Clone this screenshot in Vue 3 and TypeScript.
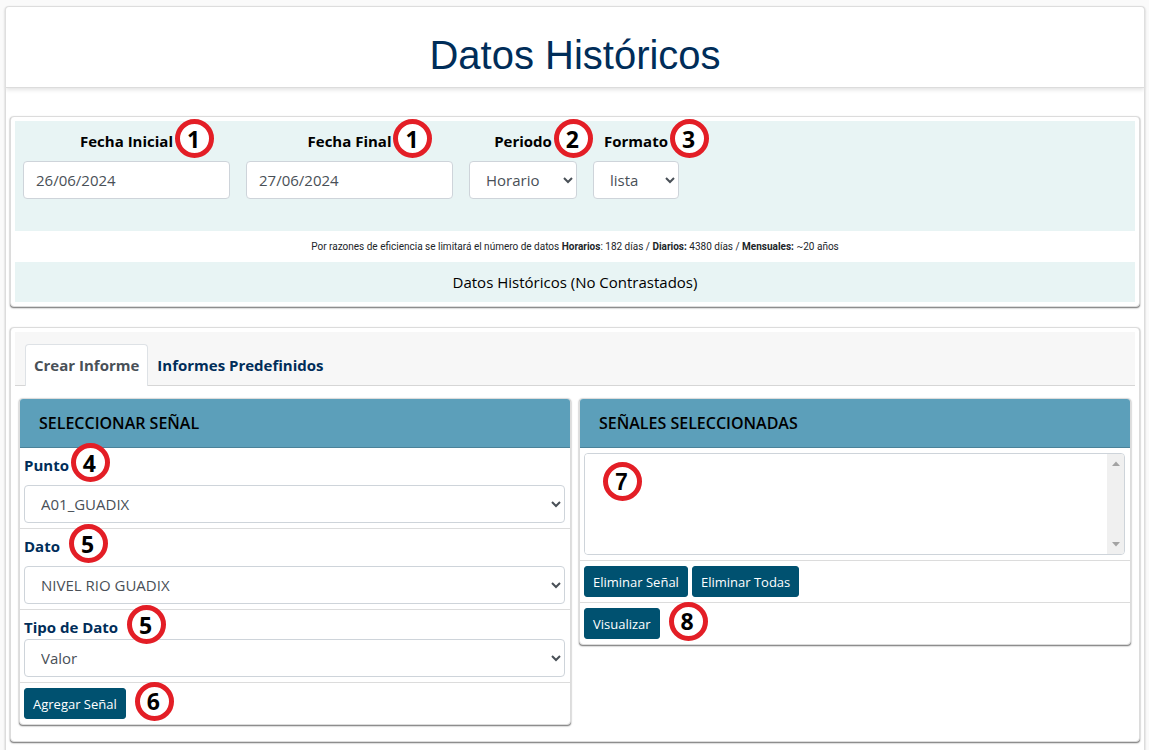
<script setup lang="ts">
import { ref } from 'vue'

interface SignalField {
  id: string
  label: string
  value: string
  step: number
  spaced: boolean
  far: boolean
}

const startDate = ref('26/06/2024')
const endDate = ref('27/06/2024')
const period = ref('Horario')
const format = ref('lista')

const fields = ref<SignalField[]>([
  { id: 'punto', label: 'Punto', value: 'A01_GUADIX', step: 4, spaced: true, far: false },
  { id: 'dato', label: 'Dato', value: 'NIVEL RIO GUADIX', step: 5, spaced: true, far: true },
  { id: 'tipo', label: 'Tipo de Dato', value: 'Valor', step: 5, spaced: false, far: true },
])
</script>

<template>
  <main class="page">
    <header class="page-header">
      <h1>Datos Históricos</h1>
    </header>

    <section class="card">
      <form class="filters" @submit.prevent>
        <div class="filter">
          <label class="anchor" for="start">Fecha Inicial<span class="badge">1</span></label>
          <input id="start" v-model="startDate" class="control" type="text">
        </div>
        <div class="filter">
          <label class="anchor" for="end">Fecha Final<span class="badge">1</span></label>
          <input id="end" v-model="endDate" class="control" type="text">
        </div>
        <div class="filter">
          <label class="anchor" for="period">Periodo<span class="badge">2</span></label>
          <select id="period" v-model="period" class="control">
            <option>Horario</option>
          </select>
        </div>
        <div class="filter">
          <label class="anchor" for="format">Formato<span class="badge">3</span></label>
          <select id="format" v-model="format" class="control">
            <option>lista</option>
          </select>
        </div>
      </form>
      <p class="note">
        Por razones de eficiencia se limitará el número de datos <b>Horarios</b>: 182 días /
        <b>Diarios:</b> 4380 días / <b>Mensuales:</b> ~20 años
      </p>
      <p class="caption">Datos Históricos (No Contrastados)</p>
    </section>

    <section class="card">
      <nav class="tabs">
        <a class="tab active" href="#crear">Crear Informe</a>
        <a class="tab" href="#predefinidos">Informes Predefinidos</a>
      </nav>
      <div class="panels">
        <section class="panel">
          <h2>SELECCIONAR SEÑAL</h2>
          <div v-for="f in fields" :key="f.id" class="row" :class="{ spaced: f.spaced }">
            <label class="anchor" :for="f.id">{{ f.label }}<span class="badge" :class="{ far: f.far }">{{ f.step }}</span></label>
            <select :id="f.id" v-model="f.value" class="control">
              <option>{{ f.value }}</option>
            </select>
          </div>
          <div class="row actions">
            <span class="anchor">
              <button type="button">Agregar Señal</button>
              <span class="badge far">6</span>
            </span>
          </div>
        </section>

        <section class="panel">
          <h2 id="selected-title">SEÑALES SELECCIONADAS</h2>
          <div class="row">
            <div class="listbox">
              <select multiple size="4" aria-labelledby="selected-title"></select>
              <div class="scrollbar" aria-hidden="true">
                <svg width="8" height="5" viewBox="0 0 8 5"><path d="M0 5 4 0.5 8 5z" fill="#a3a3a3" /></svg>
                <svg width="8" height="5" viewBox="0 0 8 5"><path d="M0 0 4 4.5 8 0z" fill="#a3a3a3" /></svg>
              </div>
              <span class="badge inside">7</span>
            </div>
          </div>
          <div class="row actions">
            <button type="button">Eliminar Señal</button>
            <button type="button">Eliminar Todas</button>
          </div>
          <div class="row actions">
            <span class="anchor">
              <button type="button">Visualizar</button>
              <span class="badge far">8</span>
            </span>
          </div>
        </section>
      </div>
    </section>
  </main>
</template>

<style>
body {
  background: #fafafa;
}
</style>

<style scoped>
* {
  box-sizing: border-box;
}

.page {
  min-height: calc(100vh - 6px);
  margin: 6px 4px 0 5px;
  padding-bottom: 8px;
  border: 1px solid #dcdcdc;
  border-bottom: 0;
  border-radius: 4px 4px 0 0;
  background: #fff;
  box-shadow: 0 1px 2px #bbb;
  font: 15px/24px "Open Sans", "Noto Sans", sans-serif;
  color: #000;
}

.page-header {
  padding: 24px 16px 8px;
  border-bottom: 1px solid #dcdcdc;
  box-shadow: 0 2px 4px #e4e4e4;
  text-align: center;
}

h1 {
  margin: 0;
  font: 400 40px/48px "Liberation Sans", Arial, sans-serif;
  color: #002d59;
}

.card {
  margin: 28px 4px 20px;
  padding: 4px;
  border: 1px solid #dcdcdc;
  border-radius: 4px;
  background: #fff;
  box-shadow: 0 1px 1px #888, 0 1px 2px #aaa;
}

.card + .card {
  margin: 20px 4px 0;
}

.filters {
  display: grid;
  grid-template-columns: 207px 207px 108px 86px;
  gap: 16px;
  padding: 8px 8px 32px;
  background: #e8f4f4;
}

.filter {
  display: flex;
  flex-direction: column;
  align-items: center;
  gap: 8px;
  font-weight: 700;
}

.anchor {
  position: relative;
  display: inline-block;
}

.control {
  display: block;
  width: 100%;
  height: 38px;
  padding: 6px 12px;
  border: 1px solid #ced4da;
  border-radius: 4px;
  background: #fff;
  color: #495057;
  font: 400 15px/24px "Open Sans", "Noto Sans", sans-serif;
}

.note {
  margin: 0;
  padding: 4px 0 3px;
  color: #212529;
  font-family: Roboto, "Open Sans", sans-serif;
  font-size: 10px;
  text-align: center;
}

.caption {
  margin: 0;
  padding: 8px;
  background: #e8f4f4;
  text-align: center;
}

.tabs {
  display: flex;
  padding: 12px 10px 0;
  border-bottom: 1px solid #d6d6d6;
  background: #f7f7f7;
}

.tab {
  margin-bottom: -1px;
  padding: 8px 8px 9px;
  border: 1px solid transparent;
  border-bottom: 0;
  border-radius: 4px 4px 0 0;
  color: #002d59;
  font-weight: 700;
  text-decoration: none;
}

.tab.active {
  border-color: #dee2e6;
  background: #fff;
  color: #495057;
}

.panels {
  display: grid;
  grid-template-columns: 1fr 1fr;
  align-items: start;
  gap: 8px;
  padding: 12px 4px;
}

.panel {
  border: 1px solid #dcdcdc;
  border-radius: 4px;
  background: #fff;
  box-shadow: 0 1px 1px #888, 0 1px 2px #aaa;
}

h2 {
  margin: 0;
  padding: 12px 19px;
  border-bottom: 1px solid #4b8299;
  border-radius: 3px 3px 0 0;
  background: #5c9fba;
  font-size: 16px;
  font-weight: 600;
  line-height: 24px;
}

.row {
  padding: 5px 5px 5px 4px;
  border-bottom: 1px solid #dcdcdc;
}

.row:last-child {
  border-bottom: 0;
}

.row label {
  color: #002d59;
  font-weight: 700;
  vertical-align: top;
}

.spaced label {
  margin-bottom: 8px;
}

.actions {
  display: flex;
  gap: 4px;
}

button {
  display: block;
  height: 31px;
  padding: 0 8px;
  border: 1px solid #005170;
  border-radius: 3px;
  background: #005170;
  color: #fff;
  font: 400 13px/20px "Open Sans", "Noto Sans", sans-serif;
}

.listbox {
  position: relative;
  display: flex;
  height: 102px;
  border: 1px solid #ced4da;
  border-radius: 4px;
  overflow: hidden;
}

.listbox select {
  flex: 1;
  border: 0;
  background: #fff;
}

.scrollbar {
  display: flex;
  flex-direction: column;
  align-items: center;
  justify-content: space-between;
  width: 17px;
  padding: 7px 0;
  background: #f0f0f0;
}

.badge {
  position: absolute;
  top: 50%;
  left: 100%;
  display: flex;
  align-items: center;
  justify-content: center;
  width: 39px;
  height: 39px;
  margin: -22px 0 0 2px;
  padding-right: 2px;
  border: 5px solid #e31e26;
  border-radius: 50%;
  background: #fff;
  color: #000;
  font-size: 23px;
  font-weight: 700;
  z-index: 1;
}

.badge.far {
  margin-left: 9px;
}

.badge.inside {
  top: 8px;
  left: 18px;
  margin: 0;
  font-family: "Liberation Sans", Arial, sans-serif;
}
</style>
